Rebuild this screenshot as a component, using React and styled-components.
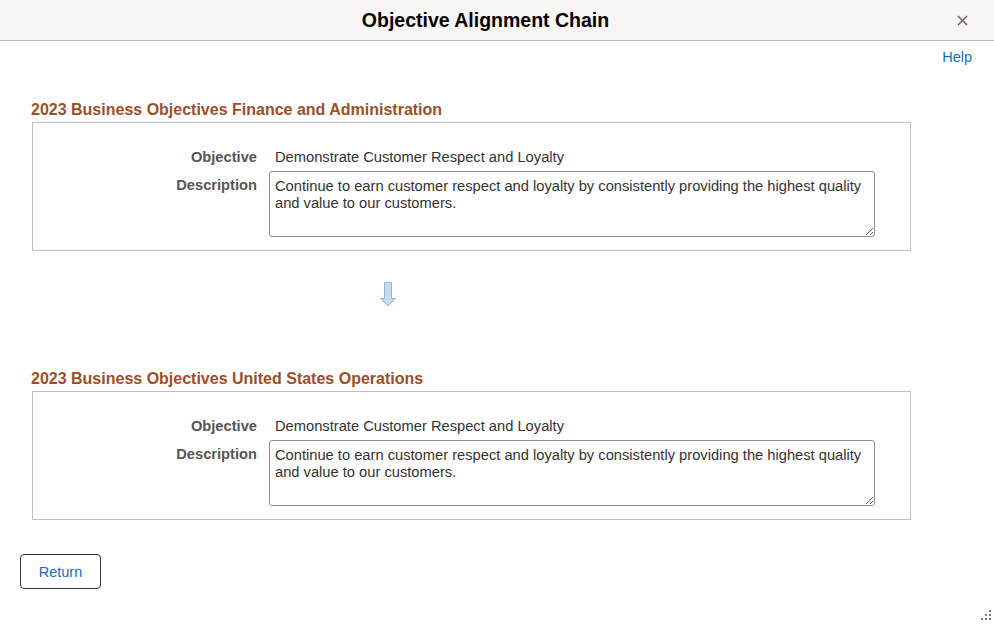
import React from 'react';
import styled, { createGlobalStyle } from 'styled-components';

const GlobalStyle = createGlobalStyle`
  html, body {
    margin: 0;
    padding: 0;
    background: #fff;
    font-family: "Liberation Sans", Arial, sans-serif;
  }
`;

const Page = styled.div`
  position: relative;
  width: 994px;
  height: 629px;
  overflow: hidden;
  background: #fff;
`;

const Header = styled.header`
  height: 40px;
  border-bottom: 1px solid #bcb8b1;
  background: #f7f6f4;
  display: flex;
  align-items: center;
  justify-content: center;
  position: relative;
`;

const Title = styled.h1`
  margin: 0 0 0 -23px;
  font-size: 19.5px;
  font-weight: bold;
  color: #000;
`;

const CloseButton = styled.button`
  position: absolute;
  right: 25px;
  top: 13px;
  width: 14px;
  height: 14px;
  padding: 0;
  border: none;
  background: none;
  display: flex;
  align-items: center;
  justify-content: center;
  cursor: pointer;
`;

const HelpRow = styled.div`
  display: flex;
  justify-content: flex-end;
  padding: 8px 22px 0 0;
`;

const HelpLink = styled.a`
  font-size: 14.5px;
  line-height: 17px;
  color: #136fb6;
  text-decoration: none;
`;

const Content = styled.div`
  padding-left: 31px;
`;

const SectionTitle = styled.h2`
  margin: ${(p) => p.$top}px 0 3px 0;
  font-size: 16px;
  line-height: 18px;
  font-weight: bold;
  color: #9a4f2a;
`;

const Box = styled.div`
  margin-left: 1px;
  width: 877px;
  border: 1px solid #c2bfba;
  padding: 26px 0 13px 0;
  display: grid;
  grid-template-columns: 224px 605px;
  column-gap: 12px;
  row-gap: 5px;
`;

const Label = styled.div`
  text-align: right;
  font-size: 14.7px;
  line-height: 17px;
  font-weight: bold;
  color: #555;
  padding-top: ${(p) => (p.$boxed ? 6 : 0)}px;
`;

const Value = styled.div`
  font-size: 14.7px;
  line-height: 17px;
  color: #333;
  padding-left: 6px;
`;

const TextArea = styled.textarea`
  box-sizing: border-box;
  width: 606px;
  height: 66px;
  margin: 0;
  padding: 6px 5px;
  border: 1px solid #8e8e8e;
  border-radius: 3px;
  font-family: "Liberation Sans", Arial, sans-serif;
  font-size: 14.7px;
  line-height: 17px;
  color: #333;
  background: #fff;
  resize: both;
  outline: none;
`;

const ArrowWrap = styled.div`
  margin: 31px 0 0 348px;
  height: 25px;
`;

const Footer = styled.div`
  padding: 34px 0 0 20px;
`;

const ReturnButton = styled.button`
  box-sizing: border-box;
  width: 81px;
  height: 35px;
  border: 1px solid #333;
  border-radius: 4px;
  background: #fff;
  color: #136fb6;
  font-family: "Liberation Sans", Arial, sans-serif;
  font-size: 14.5px;
  cursor: pointer;
`;

const Grip = styled.div`
  position: absolute;
  right: 2px;
  bottom: 3px;
`;

const sections = [
  { title: '2023 Business Objectives Finance and Administration', top: 35 },
  { title: '2023 Business Objectives United States Operations', top: 63 },
];

const objective = 'Demonstrate Customer Respect and Loyalty';
const description =
  'Continue to earn customer respect and loyalty by consistently providing the highest quality and value to our customers.';

const Section = ({ title, top }) => (
  <>
    <SectionTitle $top={top}>{title}</SectionTitle>
    <Box>
      <Label>Objective</Label>
      <Value>{objective}</Value>
      <Label $boxed>Description</Label>
      <TextArea readOnly value={description} />
    </Box>
  </>
);

const App = () => {
  return (
    <Page>
      <GlobalStyle />
      <Header>
        <Title>Objective Alignment Chain</Title>
        <CloseButton aria-label="Close">
          <svg width="11" height="11" viewBox="0 0 11 11">
            <path d="M1 1L10 10M10 1L1 10" stroke="#666" strokeWidth="1.5" />
          </svg>
        </CloseButton>
      </Header>
      <HelpRow>
        <HelpLink href="#help">Help</HelpLink>
      </HelpRow>
      <Content>
        <Section {...sections[0]} />
        <ArrowWrap>
          <svg width="18" height="25" viewBox="0 0 18 25">
            <path
              d="M5.5 0.5H12.5V16.5H16.5L9 24L1.5 16.5H5.5Z"
              fill="#c4dbf0"
              stroke="#8db5dd"
              strokeWidth="1"
            />
          </svg>
        </ArrowWrap>
        <Section {...sections[1]} />
      </Content>
      <Footer>
        <ReturnButton>Return</ReturnButton>
      </Footer>
      <Grip>
        <svg width="12" height="12" viewBox="0 0 12 12" fill="#777">
          <rect x="9" y="0" width="2" height="2" />
          <rect x="5" y="4" width="2" height="2" />
          <rect x="9" y="4" width="2" height="2" />
          <rect x="1" y="8" width="2" height="2" />
          <rect x="5" y="8" width="2" height="2" />
          <rect x="9" y="8" width="2" height="2" />
        </svg>
      </Grip>
    </Page>
  );
};

export default App;
